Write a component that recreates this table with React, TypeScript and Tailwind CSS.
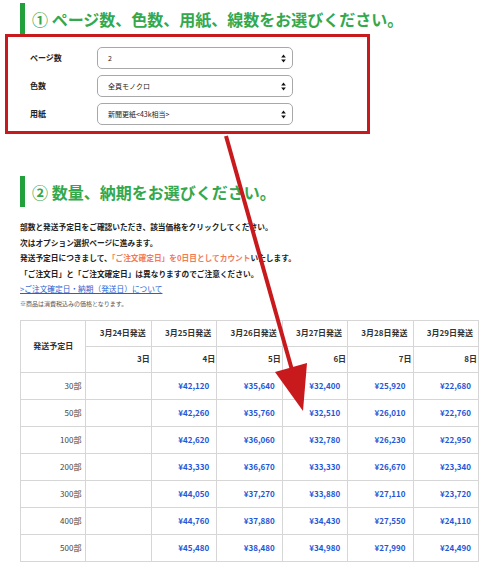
import React from 'react';

const font = { fontFamily: '"Noto Sans CJK JP", "Noto Sans", sans-serif' };

const dates = ['3月24日発送', '3月25日発送', '3月26日発送', '3月27日発送', '3月28日発送', '3月29日発送'];
const days = ['3日', '4日', '5日', '6日', '7日', '8日'];

const rows: string[][] = [
  ['30部', '', '¥42,120', '¥35,640', '¥32,400', '¥25,920', '¥22,680'],
  ['50部', '', '¥42,260', '¥35,760', '¥32,510', '¥26,010', '¥22,760'],
  ['100部', '', '¥42,620', '¥36,060', '¥32,780', '¥26,230', '¥22,950'],
  ['200部', '', '¥43,330', '¥36,670', '¥33,330', '¥26,670', '¥23,340'],
  ['300部', '', '¥44,050', '¥37,270', '¥33,880', '¥27,110', '¥23,720'],
  ['400部', '', '¥44,760', '¥37,880', '¥34,430', '¥27,550', '¥24,110'],
  ['500部', '', '¥45,480', '¥38,480', '¥34,980', '¥27,990', '¥24,490'],
];

const fields = [
  { label: 'ページ数', value: '2' },
  { label: '色数', value: '全頁モノクロ' },
  { label: '用紙', value: '新聞更紙<43k相当>' },
];

const Heading = ({ children }: { children: React.ReactNode }) => (
  <div className="ml-[20px] flex h-[31px] items-center border-l-[5px] border-[#22a03c] pl-[7px]">
    <span className="text-[16px] font-bold text-[#33a84c]">{children}</span>
  </div>
);

const SelectBox = ({ value }: { value: string }) => (
  <div className="flex h-[22px] w-[196px] items-center justify-between rounded-[5px] border border-[#a8a8a8] bg-white pl-[10px] pr-[6px]">
    <span className="text-[7px] text-[#222]">{value}</span>
    <svg width="5" height="9" viewBox="0 0 5 9">
      <path d="M2.5 0.5 L4.8 3.6 L0.2 3.6 Z" fill="#111" />
      <path d="M2.5 8.5 L4.8 5.4 L0.2 5.4 Z" fill="#111" />
    </svg>
  </div>
);

export default function App() {
  return (
    <div className="relative h-[581px] w-[500px] overflow-hidden bg-white" style={font}>
      <div className="pt-[3px]">
        <Heading>① ページ数、色数、用紙、線数をお選びください。</Heading>
      </div>

      <div className="ml-[5px] w-[365px] border-[3px] border-[#c8191c] pb-[6px] pt-[10px]">
        <div className="flex flex-col gap-[6px]">
          {fields.map((f) => (
            <div key={f.label} className="flex h-[22px] items-center">
              <div className="w-[89px] pl-[22px] text-[8px] font-bold text-[#222]">{f.label}</div>
              <SelectBox value={f.value} />
            </div>
          ))}
        </div>
      </div>

      <div className="mt-[42px]">
        <Heading>② 数量、納期をお選びください。</Heading>
      </div>

      <div className="ml-[20px] mt-[12px] text-[7.7px] font-bold leading-[15.5px] text-[#222]">
        <p>部数と発送予定日をご確認いただき、該当価格をクリックしてください。</p>
        <p>次はオプション選択ページに進みます。</p>
        <p>
          発送予定日につきまして、<span className="text-[#f47a55]">「ご注文確定日」を0日目としてカウント</span>いたします。
        </p>
        <p>「ご注文日」と「ご注文確定日」は異なりますのでご注意ください。</p>
        <p className="font-normal text-[#2a5fd0] underline">&gt;ご注文確定日・納期（発送日）について</p>
        <p className="text-[6px] font-normal leading-[14px] text-[#555]">※商品は消費税込みの価格となります。</p>
      </div>

      <table className="ml-[20px] mt-[9px] w-[459px] table-fixed border-collapse border border-[#d6d6d6] text-[8px]">
        <thead>
          <tr className="h-[26px]">
            <th rowSpan={2} className="border border-[#d6d6d6] text-center font-bold text-[#333]">
              発送予定日
            </th>
            {dates.map((d) => (
              <th key={d} className="border border-[#d6d6d6] pr-[5px] text-right font-bold text-[#333]">
                {d}
              </th>
            ))}
          </tr>
          <tr className="h-[26px]">
            {days.map((d) => (
              <th key={d} className="border border-[#d6d6d6] pr-[1px] text-right font-bold text-[#333]">
                {d}
              </th>
            ))}
          </tr>
        </thead>
        <tbody>
          {rows.map((r) => (
            <tr key={r[0]} className="h-[27px]">
              {r.map((c, i) => (
                <td
                  key={i}
                  className={
                    i === 0
                      ? 'border border-[#d6d6d6] pr-[4px] text-right text-[#444]'
                      : 'border border-[#d6d6d6] pr-[7px] text-right font-bold text-[#2457d6]'
                  }
                >
                  {c}
                </td>
              ))}
            </tr>
          ))}
        </tbody>
      </table>

      <svg className="pointer-events-none absolute left-0 top-0" width="500" height="581" viewBox="0 0 500 581">
        <line x1="226" y1="136" x2="292" y2="370" stroke="#c8191c" strokeWidth="4" />
        <polygon points="275,372 307,363 303,411" fill="#c8191c" />
      </svg>
    </div>
  );
}
